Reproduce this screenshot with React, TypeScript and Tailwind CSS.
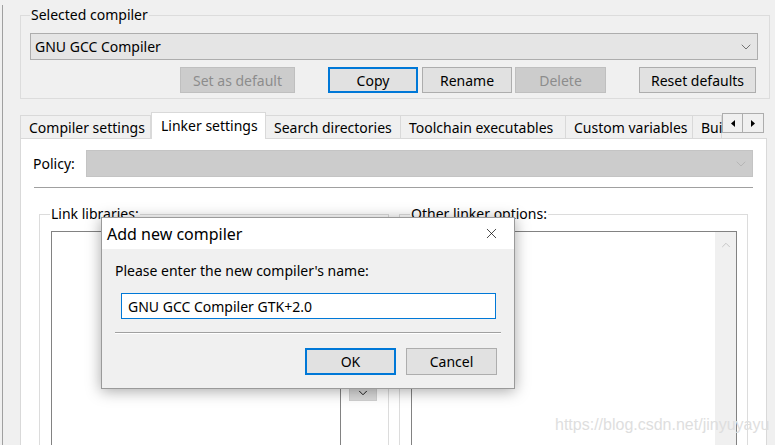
import { ChevronDown, ChevronUp, X } from "lucide-react";

const tabs = [
  { name: "Compiler settings", w: "w-[131px]" },
  { name: "Linker settings", w: "w-[115px]", active: true },
  { name: "Search directories", w: "w-[136px]" },
  { name: "Toolchain executables", w: "w-[166px]" },
  { name: "Custom variables", w: "w-[128px]" },
  { name: "Bui", w: "w-[30px]" },
];

function WinButton({
  label,
  w,
  disabled,
  focused,
}: {
  label: string;
  w: string;
  disabled?: boolean;
  focused?: boolean;
}) {
  return (
    <div
      className={`${w} h-[26px] flex items-center justify-center text-[14px] ${
        disabled
          ? "bg-[#cccccc] border border-[#bfbfbf] text-[#8c8c8c]"
          : focused
          ? "bg-[#e1e1e1] border-2 border-[#0078d7] text-black"
          : "bg-[#e1e1e1] border border-[#adadad] text-black"
      }`}
    >
      {label}
    </div>
  );
}

export default function App() {
  return (
    <div
      className="relative w-[775px] h-[445px] overflow-hidden bg-[#f0f0f0] pl-[2px] text-[#000]"
      style={{ fontFamily: '"Noto Sans", "Open Sans", sans-serif' }}
    >
      <div className="h-full border-l border-[#a0a0a0] pl-[17px]">
        {/* Selected compiler group */}
        <fieldset className="mt-[5px] w-[750px] border border-[#dcdcdc] pl-[9px] pr-[11px] pb-[5px]">
          <legend className="px-[1px] text-[14px] leading-[20px]">Selected compiler</legend>
          <div className="mt-[8px] h-[27px] bg-[#e5e5e5] border border-[#adadad] flex items-center pl-[4px] pr-[3px] text-[14px]">
            <span className="flex-1">GNU GCC Compiler</span>
            <ChevronDown size={16} strokeWidth={1.2} className="text-[#555]" />
          </div>
          <div className="mt-[7px] flex items-center">
            <div className="ml-[150px]">
              <WinButton label="Set as default" w="w-[115px]" disabled />
            </div>
            <div className="ml-[33px]">
              <WinButton label="Copy" w="w-[90px]" focused />
            </div>
            <div className="ml-[4px]">
              <WinButton label="Rename" w="w-[90px]" />
            </div>
            <div className="ml-[3px]">
              <WinButton label="Delete" w="w-[91px]" disabled />
            </div>
            <div className="ml-[33px]">
              <WinButton label="Reset defaults" w="w-[117px]" />
            </div>
          </div>
        </fieldset>

        {/* Tabs */}
        <div className="mt-[13px] w-[747px] flex items-end h-[26px] relative z-10">
          {tabs.map((t) =>
            t.active ? (
              <div
                key={t.name}
                className={`${t.w} h-[27px] -mb-[1px] bg-white border border-b-0 border-[#d9d9d9] flex items-center pl-[9px] pb-[2px] text-[14px] whitespace-nowrap`}
              >
                {t.name}
              </div>
            ) : (
              <div
                key={t.name}
                className={`${t.w} h-[23px] bg-[#f0f0f0] border border-b-0 border-[#d9d9d9] -ml-px first:ml-0 flex items-center pl-[8px] text-[14px] whitespace-nowrap`}
              >
                {t.name}
              </div>
            )
          )}
          <div className="self-start mt-[1px] flex">
            <div className="w-[21px] h-[20px] border border-[#adadad] bg-[#f0f0f0] flex items-center justify-center">
              <svg width="4" height="7" viewBox="0 0 4 7"><path d="M4 0L0 3.5L4 7Z" fill="#000" /></svg>
            </div>
            <div className="w-[21px] h-[20px] border border-l-0 border-[#adadad] bg-[#f0f0f0] flex items-center justify-center">
              <svg width="4" height="7" viewBox="0 0 4 7"><path d="M0 0L4 3.5L0 7Z" fill="#000" /></svg>
            </div>
          </div>
        </div>

        {/* Tab panel */}
        <div className="w-[747px] h-[320px] bg-white border border-[#d9d9d9] pl-[12px] pr-[13px]">
          <div className="mt-[11px] flex items-center">
            <span className="w-[53px] text-[14px]">Policy:</span>
            <div className="flex-1 h-[27px] bg-[#cccccc] border border-[#c4c4c4] flex items-center justify-end pr-[3px]">
              <ChevronDown size={16} strokeWidth={1.2} className="text-[#b0b0b0]" />
            </div>
          </div>
          <div className="mt-[10px] ml-[1px] h-px bg-[#a0a0a0]" />

          <div className="mt-[16px] ml-[6px] flex gap-[10px]">
            <fieldset className="w-[350px] h-[260px] border border-[#dcdcdc]">
              <legend className="ml-[10px] px-[1px] text-[14px] leading-[20px]">Link libraries:</legend>
              <div className="mt-[7px] ml-[11px] flex">
                <div className="w-[290px] h-[240px] border border-[#828282] bg-white" />
                <div className="ml-[8px] flex flex-col">
                  <div className="mt-[126px] w-[28px] h-[17px] bg-[#dadada] border border-[#d0d0d0] flex items-center justify-center">
                    <ChevronUp size={14} strokeWidth={1.5} />
                  </div>
                  <div className="mt-[10px] w-[28px] h-[17px] bg-[#dadada] border border-[#d0d0d0] flex items-center justify-center">
                    <ChevronDown size={14} strokeWidth={1.5} />
                  </div>
                </div>
              </div>
            </fieldset>
            <fieldset className="w-[349px] h-[260px] border border-[#dcdcdc]">
              <legend className="ml-[10px] px-[1px] text-[14px] leading-[20px]">Other linker options:</legend>
              <div className="mt-[7px] ml-[11px] w-[326px] h-[240px] border border-[#828282] bg-white flex justify-end">
                <div className="w-[21px] h-full bg-[#f0f0f0] flex justify-center pt-[6px]">
                  <ChevronUp size={14} strokeWidth={1.5} className="text-[#c0c0c0]" />
                </div>
              </div>
            </fieldset>
          </div>
        </div>
      </div>

      {/* Add new compiler dialog */}
      <div className="absolute left-[101px] top-[217px] w-[414px] h-[172px] border border-[#9a9a9a] bg-[#f0f0f0] shadow-[0_2px_14px_rgba(0,0,0,0.35)] flex flex-col">
        <div className="h-[31px] bg-white flex items-center pl-[5px] pr-[14px]">
          <span className="flex-1 text-[16px]">Add new compiler</span>
          <X size={17} strokeWidth={1} />
        </div>
        <div className="pl-[13px] pr-[13px]">
          <div className="mt-[12px] text-[14px] leading-[20px]">Please enter the new compiler's name:</div>
          <div className="mt-[12px] ml-[6px] w-[375px] h-[26px] bg-white border border-[#0078d7] flex items-center pl-[6px] text-[14px]">
            GNU GCC Compiler GTK+2.0
          </div>
          <div className="mt-[13px] h-[2px] border-t border-[#a0a0a0] border-b border-b-white" />
          <div className="mt-[14px] flex">
            <div className="ml-[190px]">
              <WinButton label="OK" w="w-[91px] h-[27px]" focused />
            </div>
            <div className="ml-[10px]">
              <WinButton label="Cancel" w="w-[91px] h-[27px]" />
            </div>
          </div>
        </div>
      </div>

      {/* watermark */}
      <div
        className="absolute left-[555px] top-[413px] text-[16px] text-[#dedede] whitespace-nowrap"
        style={{ fontFamily: '"Liberation Sans", Arial, sans-serif' }}
      >
        https://blog.csdn.net/jinyuyayu
      </div>
    </div>
  );
}
